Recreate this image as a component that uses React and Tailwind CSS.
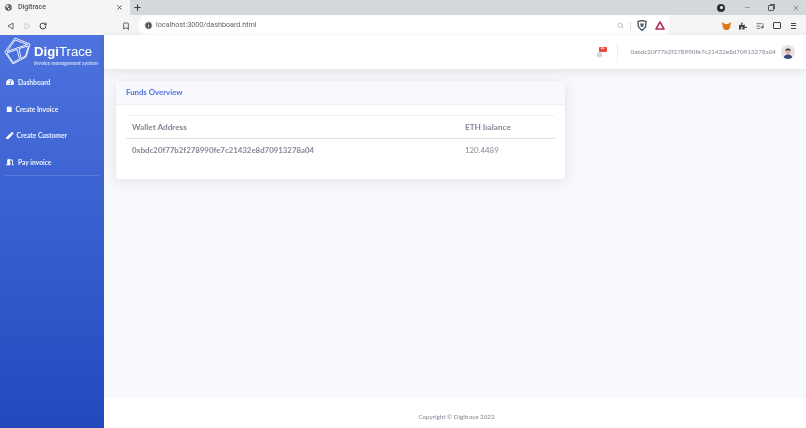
import React from "react";
import { RotateCw, Bookmark, ListMusic, X, Plus, Minus, Search, Info } from "lucide-react";
import { FaTachometerAlt, FaClipboard, FaPen, FaDoorOpen, FaBell, FaPuzzlePiece, FaGlobeAmericas } from "react-icons/fa";

function Nav({ icon, label, gap }) {
  return (
    <div className={`flex items-center h-[26.500px] pl-[6px] text-white font-bold text-[6.700px] ${gap}`}>
      {icon}
      <span className="text-white/90">{label}</span>
    </div>
  );
}

export default function App() {
  return (
    <div className="w-[806px] h-[428px] overflow-hidden flex flex-col bg-[#f8f9fc] blur-[0.35px] font-['Lato','Open_Sans',sans-serif]">
      {/* tab strip */}
      <div className="h-[15px] shrink-0 flex items-center bg-[#d5d8da] text-[#3c4043]">
        <div className="w-[130px] h-full bg-[#f5f5f5] flex items-center pl-[5px] pr-[7px] gap-[6px]">
          <FaGlobeAmericas size={7} className="text-[#555]" />
          <span className="flex-1 text-[7px] text-[#555] font-['Roboto',sans-serif] font-medium">Digitrace</span>
          <X size={7} strokeWidth={3} />
        </div>
        <Plus size={9} strokeWidth={3} className="ml-[3px]" />
        <div className="flex-1" />
        <div className="w-[8px] h-[8px] rounded-full bg-[#2b2f33] mr-[19px] flex items-center justify-center">
          <div className="w-[3px] h-[3px] rounded-full bg-white" />
        </div>
        <Minus size={7} className="mr-[17px] text-[#666]" />
        <div className="relative w-[6px] h-[6px] border border-[#555] rounded-[1px] mr-[18px]">
          <div className="absolute -top-[2px] -right-[2px] w-[5px] h-[5px] border-t border-r border-[#555]" />
        </div>
        <X size={8} className="mr-[6px] text-[#666]" />
      </div>
      {/* toolbar */}
      <div className="h-[20px] shrink-0 flex items-center bg-[#f5f5f5] text-[#555]">
        <svg width="7" height="8" viewBox="0 0 7 8" className="ml-[7px] mt-[1px]"><path d="M6 1 1 4 6 7Z" fill="none" stroke="#666" strokeWidth="1" /></svg>
        <svg width="7" height="8" viewBox="0 0 7 8" className="ml-[10px] mt-[1px]"><path d="M1 1 6 4 1 7Z" fill="none" stroke="#ccc" strokeWidth="1" /></svg>
        <RotateCw size={8} strokeWidth={3} className="ml-[8px] mt-[1px] text-[#444]" />
        <Bookmark size={8} strokeWidth={2.500} className="ml-[75px] mt-[1px] text-[#444]" />
        <div className="ml-[9px] w-[530px] h-full bg-white rounded-l-[8px] flex items-center pl-[5px] pt-[1px]">
          <Info size={9} fill="#555" stroke="#fff" strokeWidth={2} />
          <span className="ml-[3px] text-[7.200px] text-[#666] font-['Roboto',sans-serif]">localhost:3000/dashboard.html</span>
          <div className="flex-1" />
          <Search size={7} className="text-[#999]" />
          <div className="w-px h-[8px] bg-[#ddd] ml-[6px]" />
          <svg width="10" height="11" viewBox="0 0 10 11" className="ml-[6px]"><path d="M1 1.500 5 .5 9 1.500 8.500 7 5 10.500 1.500 7Z" fill="#fff" stroke="#56616b" strokeWidth="1.500" /><path d="M3 3.500H7L6 7H4Z" fill="#56616b" /></svg>
          <svg width="10" height="9" viewBox="0 0 10 9" className="ml-[8px] mr-[4px]"><path d="M5 1 9 8H1Z" fill="#fff" stroke="#b3305f" strokeWidth="1.600" strokeLinejoin="round" /></svg>
        </div>
        <svg width="9" height="8" viewBox="0 0 9 8" className="ml-[53px] mt-[1px]"><path d="M0 0 3 2H6L9 0 8 6 6 8H3L1 6Z" fill="#e2761b" /></svg>
        <FaPuzzlePiece size={8} className="ml-[8px] mt-[1px] text-[#444]" />
        <ListMusic size={8} className="ml-[9px] mt-[1px] text-[#444]" />
        <div className="ml-[9px] mt-[1px] w-[8px] h-[7px] rounded-[1px] border border-[#444]" />
        <div className="ml-[10px] mt-[1px] flex flex-col gap-[1.500px]">
          <div className="w-[5px] h-px bg-[#444]" />
          <div className="w-[5px] h-px bg-[#444]" />
          <div className="w-[5px] h-px bg-[#444]" />
        </div>
      </div>
      {/* page */}
      <div className="flex-1 flex min-h-0">
        <aside className="w-[104px] shrink-0 flex flex-col bg-gradient-to-b from-[#4e73df] to-[#224abe]">
          <div className="h-[34px] flex items-start pl-[4px] shrink-0">
            <svg width="27" height="28" viewBox="0 0 27 28" fill="none" stroke="#fff" strokeWidth="0.900" strokeLinejoin="round" className="mt-[1.500px]">
              <path d="M11 1 26 7 22 20 9 27 .8 15Z" />
              <path d="M11 3 23.500 7.500 13 11 3 14.500Z" />
              <path d="M13 12.500 15.500 22 9 25.500 2.800 16Z" />
              <path d="M15 11.500 24.500 9 21.500 19 17 21.500Z" />
            </svg>
            <div className="ml-[3px] mt-[9px] flex flex-col text-white leading-none">
              <span className="text-[13.200px] font-['Liberation_Sans',sans-serif] leading-[15px]"><b>Digi</b>Trace</span>
              <span className="text-[5.400px] font-bold italic text-white/70 leading-[6px] mt-[1px] whitespace-nowrap">Invoice management system</span>
            </div>
          </div>
          <div className="flex flex-col">
            <Nav gap="gap-[4px]" label="Dashboard" icon={<FaTachometerAlt size={8} />} />
            <Nav gap="gap-[3px]" label="Create Invoice" icon={<FaClipboard size={6.500} />} />
            <Nav gap="gap-[3px]" label="Create Customer" icon={<FaPen size={7.500} />} />
            <Nav gap="gap-[4px]" label="Pay invoice" icon={<FaDoorOpen size={8} />} />
          </div>
          <div className="mx-[5px] h-px bg-white/15" />
        </aside>
        <div className="flex-1 flex flex-col min-w-0">
          <header className="h-[34px] shrink-0 bg-white shadow-[0_2px_8px_rgba(58,59,69,0.12)] flex items-center justify-end">
            <div className="relative w-[9px] h-[9px] mr-[12px] text-[#d1d3e2]">
              <FaBell size={7} className="mt-[3px]" />
              <span className="absolute -top-[1px] left-[3px] w-[8px] h-[5px] rounded-[1px] bg-[#e74a3b] text-white text-[3.500px] leading-none font-bold flex items-center justify-center">3+</span>
            </div>
            <div className="w-px h-[19px] bg-[#eceef4] mr-[13px]" />
            <span className="text-[6.300px] text-[#858796]">0xbdc20f77b2f278990fe7c21432e8d70913278a04</span>
            <div className="ml-[4.500px] mr-[11.500px] w-[14px] h-[14px] rounded-full bg-[#e3e3e8] overflow-hidden">
              <svg viewBox="0 0 14 14" width="14" height="14"><path d="M2.500 14C2.500 10.500 5 9.500 7 9.500s4.500 1 4.500 4.500Z" fill="#3d4a7a" /><circle cx="7" cy="6.500" r="2.500" fill="#e8a9a0" /><path d="M4.200 6C4.200 2.500 9.800 2.500 9.800 6 8 4.800 6 4.800 4.200 6Z" fill="#222" /></svg>
            </div>
          </header>
          <main className="flex-1 pt-[12px] pl-[12px] min-h-0">
            <section className="w-[449px] h-[98px] bg-white rounded-[3px] shadow-[0_2px_14px_rgba(58,59,69,0.13)] overflow-hidden">
              <div className="h-[24px] bg-[#f8f9fc] border-b border-[#eef0f6] flex items-center pl-[10px] text-[7.800px] font-bold text-[#4e73df]">Funds Overview</div>
              <div className="px-[10px] pt-[10px]">
                <div className="border-t border-[#f0f1f6]">
                  <div className="h-[23px] border-b border-[#dfe1ea] grid grid-cols-[333px_1fr] items-center pl-[6px] text-[8.200px] font-bold text-[#858796]">
                    <span>Wallet Address</span>
                    <span>ETH balance</span>
                  </div>
                  <div className="h-[23px] grid grid-cols-[333px_1fr] items-center pl-[6px] text-[7.850px] text-[#858796]">
                    <span className="font-bold">0xbdc20f77b2f278990fe7c21432e8d70913278a04</span>
                    <span>120.4489</span>
                  </div>
                </div>
              </div>
            </section>
          </main>
          <footer className="h-[30px] shrink-0 bg-white flex items-center justify-center pt-[8px] pl-[3px] text-[6.250px] text-[#858796]">Copyright © Digitrace 2022</footer>
        </div>
      </div>
    </div>
  );
}
